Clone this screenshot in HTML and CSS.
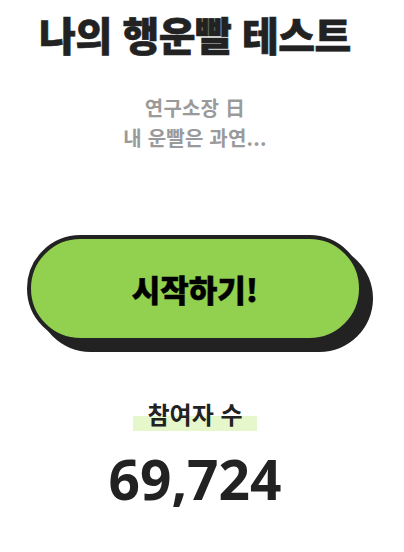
FILE: index.html
```html
<!DOCTYPE html>
<html lang="ko">
<head>
    <meta charset="UTF-8">
    <meta name="viewport" content="width=device-width, initial-scale=1.0">
    <title>나의 행운빨 테스트</title>
    <link rel="stylesheet" href="styles.css">
</head>
<body>
    <div class="page">
        <h1 class="title">나의 행운빨 테스트</h1>
        <p class="intro">연구소장 日<br>내 운빨은 과연...</p>
        <button type="button" class="start-button">시작하기!</button>
        <div class="stats">
            <p class="stats-label"><span>참여자 수</span></p>
            <p class="stats-count">69,724</p>
        </div>
    </div>
</body>
</html>
```

FILE: styles.css
```css
body {
    margin: 0;
    font-family: "Noto Sans CJK KR", "Noto Sans", sans-serif;
    background-color: #ffffff;
    color: #222;
}
.page {
    width: 390px;
    display: flex;
    flex-direction: column;
    align-items: center;
}
.title {
    margin: 10px 0 0;
    font-size: 40px;
    line-height: 48px;
    font-weight: 900;
    letter-spacing: -0.5px;
    color: #222;
    -webkit-text-stroke: 0.6px #222;
}
.intro {
    margin: 35px 0 0;
    font-size: 20px;
    line-height: 30px;
    font-weight: 700;
    letter-spacing: 0.2px;
    color: #9a9a9a;
    text-align: center;
}
.start-button {
    width: 336px;
    height: 107px;
    margin-top: 82px;
    border: 4px solid #222;
    border-radius: 54px;
    background-color: #92d050;
    box-shadow: 10px 10px 0 #222;
    font-family: inherit;
    font-size: 31px;
    font-weight: 900;
    color: #000;
    -webkit-text-stroke: 0.5px #000;
    cursor: pointer;
}
.stats {
    display: flex;
    flex-direction: column;
    align-items: center;
}
.stats-label {
    margin: 57px 0 0;
    font-size: 24px;
    line-height: 30px;
    font-weight: 700;
}
.stats-label > span {
    padding: 0 14px;
    background: linear-gradient(transparent 58%, #e6f8cb 58%);
}
.stats-count {
    margin: 16px 0 0;
    font-family: "Noto Sans", sans-serif;
    font-size: 55px;
    line-height: 68px;
    font-weight: 700;
}
```
